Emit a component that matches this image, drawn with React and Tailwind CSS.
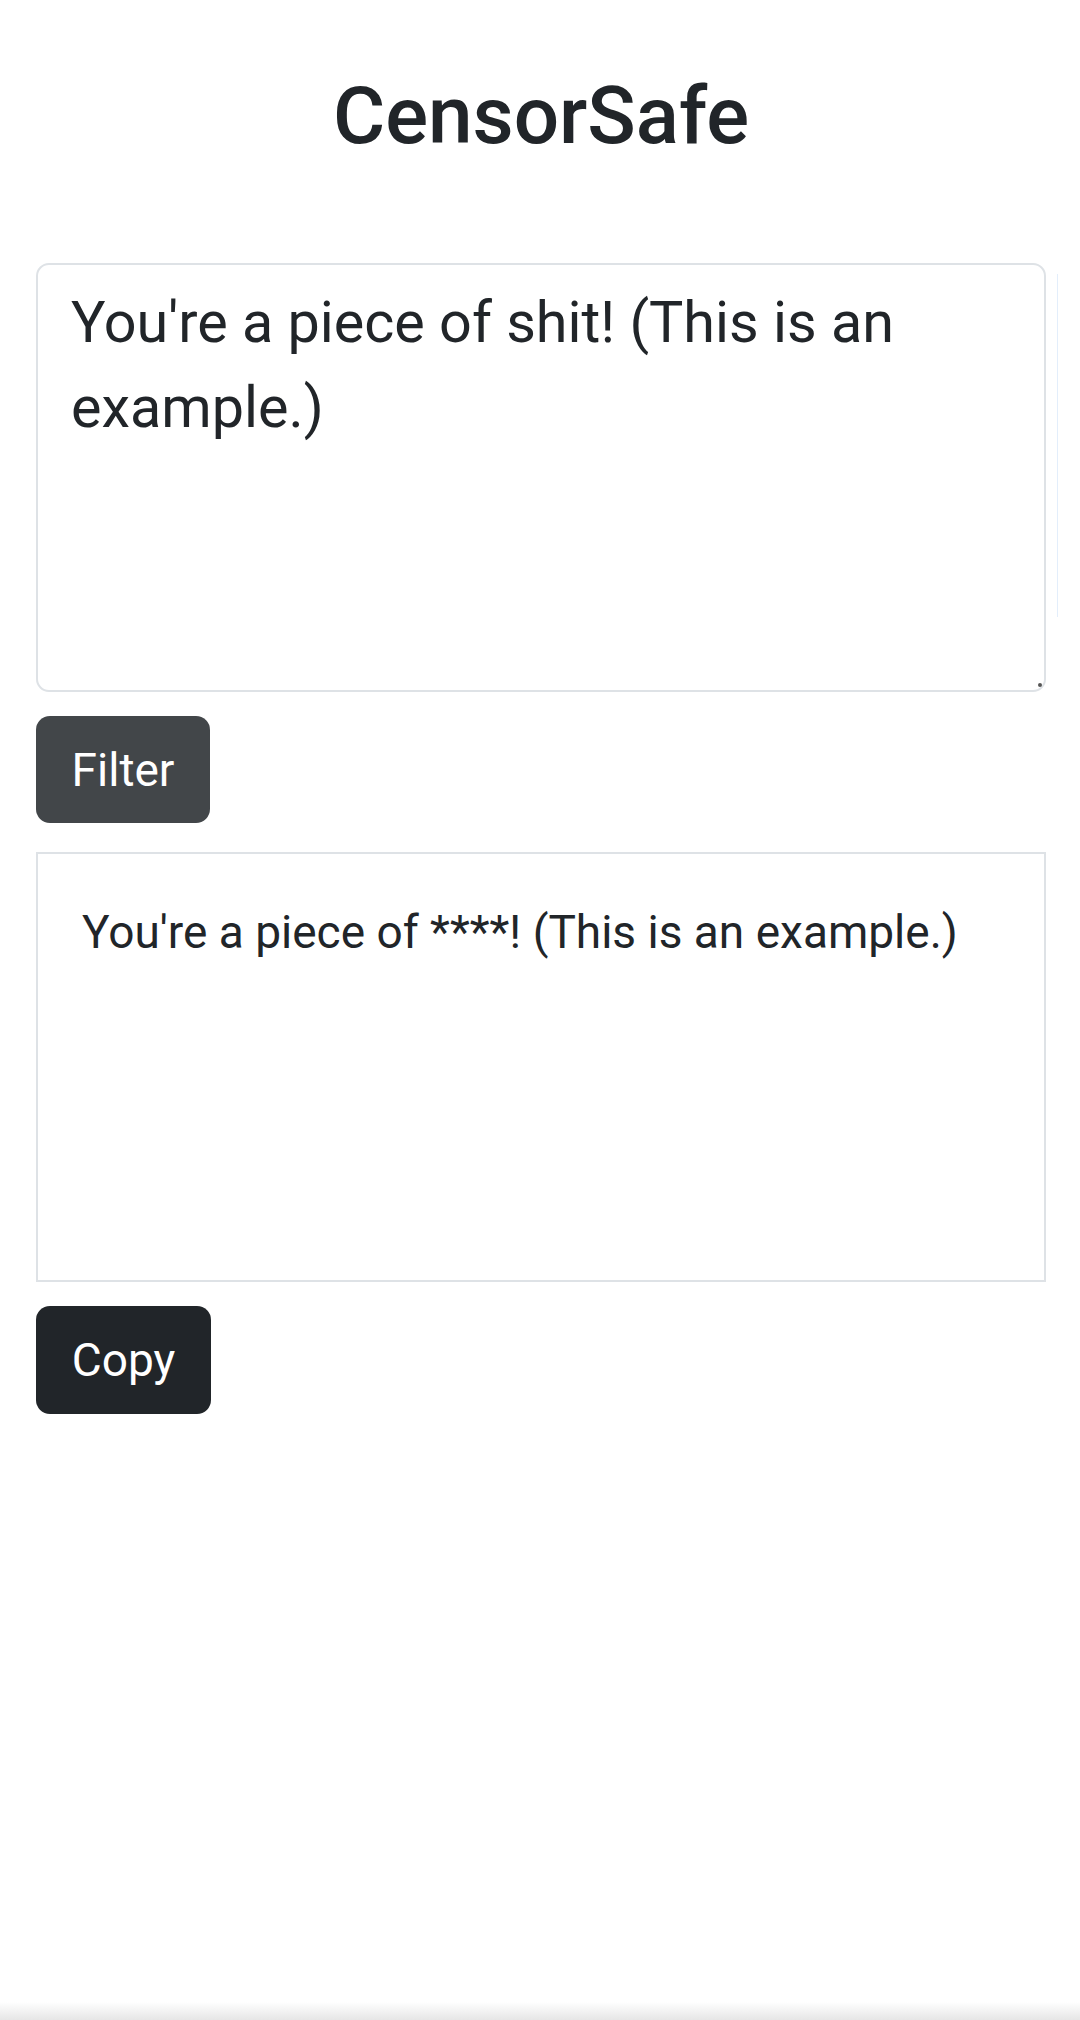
import { useState } from 'react';

const sample = "You're a piece of shit! (This is an example.)";

const censor = (text) => text.replace(/shit/gi, (m) => '*'.repeat(m.length));

export default function App() {
  const [input, setInput] = useState(sample);
  const [output, setOutput] = useState(censor(sample));

  return (
    <div className="relative min-h-[2020px] bg-white font-['Roboto','Liberation_Sans',sans-serif] text-[#212529] pl-[36px] pr-[34px]">
      <h1 className="pt-[68px] text-center text-[80px] leading-[96px] font-medium">CensorSafe</h1>

      {/* Input */}
      <div className="relative mt-[99px]">
        <textarea
          value={input}
          onChange={(e) => setInput(e.target.value)}
          className="block w-full h-[429px] resize-none rounded-[13px] border-2 border-[#dee2e6] bg-white pl-[33px] pr-[30px] pt-[15px] text-[57.5px] leading-[85px] text-[#212529] outline-none"
        />
        <span className="absolute right-[4px] bottom-[5px] w-[4px] h-[4px] rounded-full bg-[#555]" />
        <span className="absolute -right-[12px] top-[11px] w-px h-[343px] bg-[#e3eefb]" />
      </div>

      <button
        onClick={() => setOutput(censor(input))}
        className="mt-[24px] flex items-center justify-center w-[174px] h-[107px] rounded-[14px] bg-[#424649] text-white text-[46px] leading-none"
      >
        Filter
      </button>

      {/* Output */}
      <div className="mt-[29px] h-[430px] border-2 border-[#dee2e6] px-[44px] pt-[44px] text-[46px] leading-[68px]">
        {output}
      </div>

      <button
        onClick={() => navigator.clipboard?.writeText(output)}
        className="mt-[24px] flex items-center justify-center w-[175px] h-[108px] rounded-[14px] bg-[#212529] text-white text-[46px] leading-none"
      >
        Copy
      </button>

      <div className="absolute left-0 right-0 bottom-0 h-[18px] bg-gradient-to-b from-white to-[#e6e6e6]" />
    </div>
  );
}
